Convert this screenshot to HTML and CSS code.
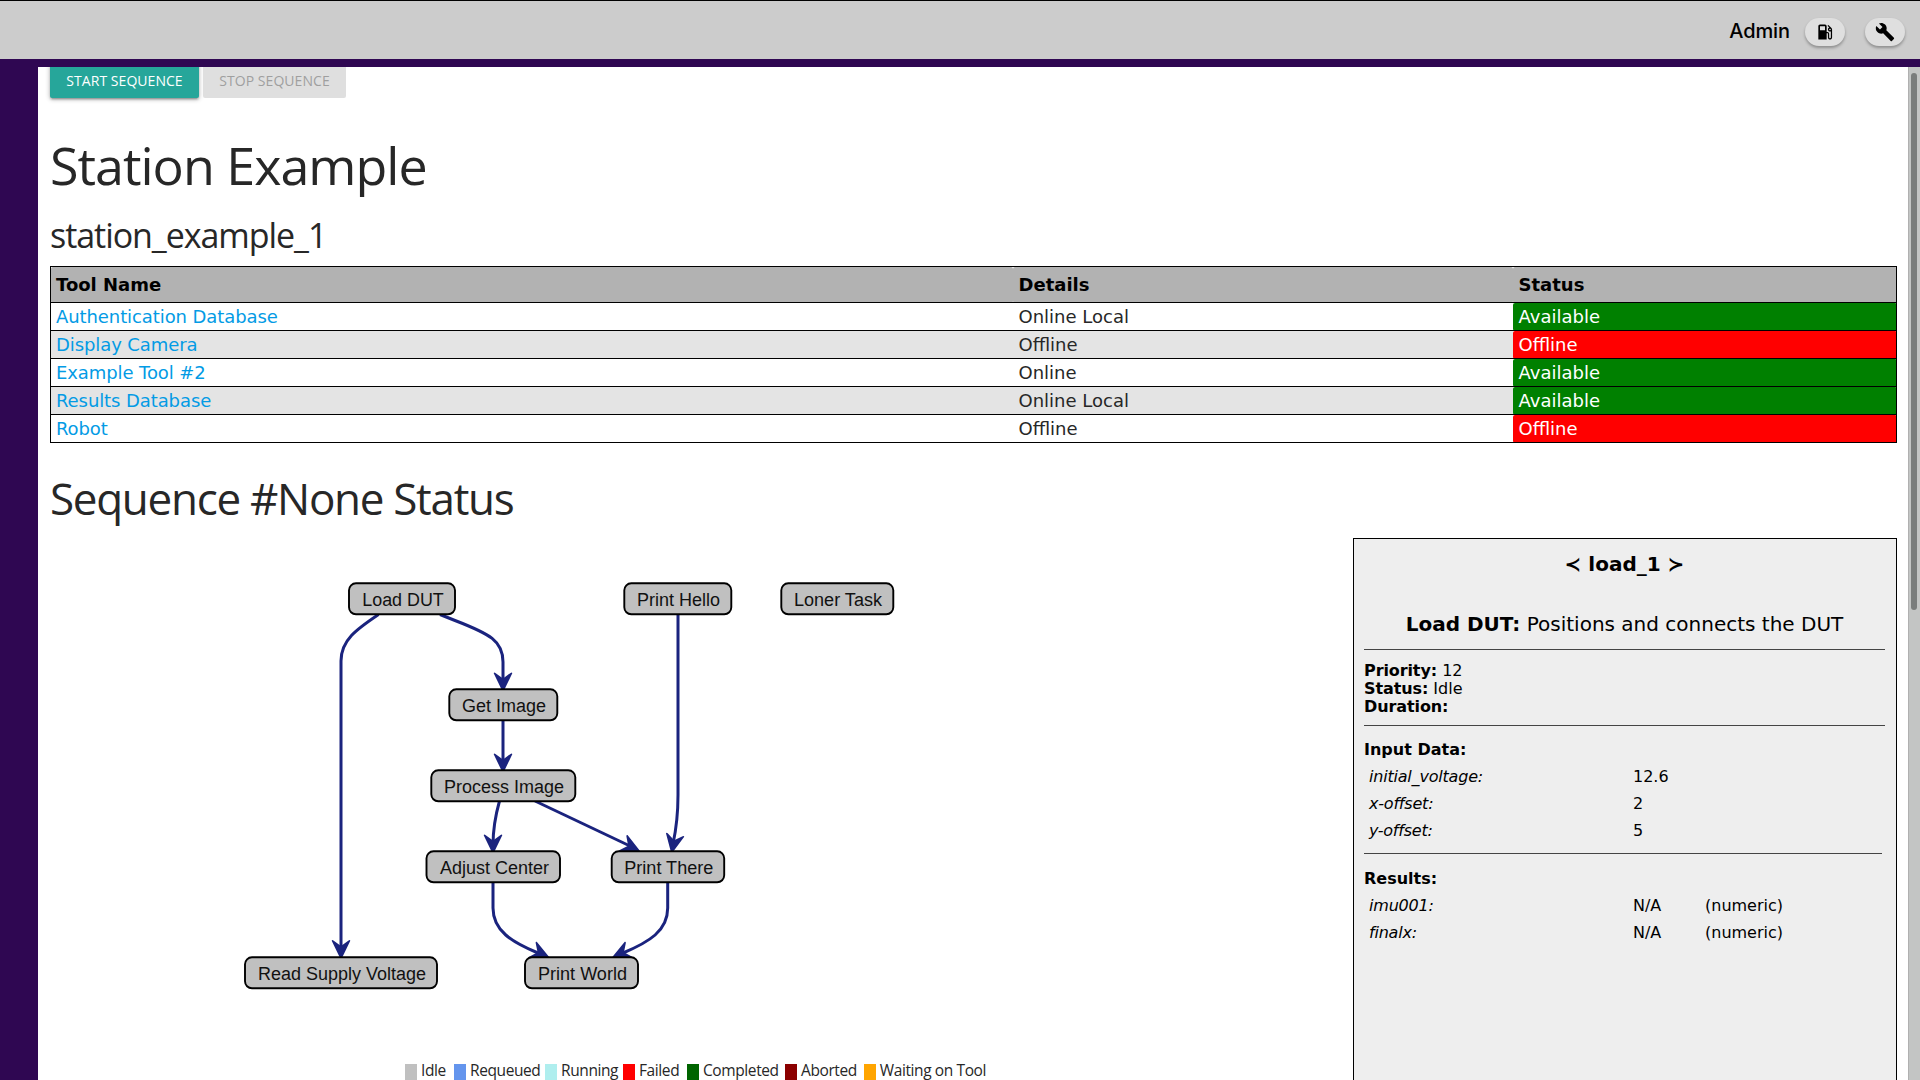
FILE: index.html
```html
<!DOCTYPE html>
<html lang="en">
<head>
<meta charset="utf-8">
<title>Station Example</title>
<link rel="stylesheet" href="styles.css">
</head>
<body>
<header class="topbar">
  <span class="user">Admin</span>
  <button class="pill" aria-label="Fixture"><svg viewBox="0 0 24 24"><path d="M19.77 7.23l.01-.01-3.72-3.72L15 4.56l2.11 2.11c-.94.36-1.61 1.26-1.61 2.33 0 1.38 1.12 2.5 2.5 2.5.36 0 .69-.08 1-.21v7.21c0 .55-.45 1-1 1s-1-.45-1-1V14c0-1.1-.9-2-2-2h-1V5c0-1.1-.9-2-2-2H6c-1.1 0-2 .9-2 2v16h10v-7.5h1.5v5c0 1.38 1.12 2.5 2.5 2.5s2.5-1.12 2.5-2.5V9c0-.69-.28-1.32-.73-1.77zM12 10H6V5h6v5zm6 0c-.55 0-1-.45-1-1s.45-1 1-1 1 .45 1 1-.45 1-1 1z"/></svg></button>
  <button class="pill" aria-label="Tools"><svg viewBox="0 0 24 24"><path d="M22.7 19l-9.1-9.1c.9-2.3.4-5-1.5-6.9-2-2-5-2.4-7.4-1.3L9 6 6 9 1.6 4.7C.4 7.1.9 10.1 2.9 12.1c1.9 1.9 4.6 2.4 6.9 1.5l9.1 9.1c.4.4 1 .4 1.4 0l2.3-2.3c.5-.4.5-1.1.1-1.4z"/></svg></button>
</header>
<div class="shell">
  <main class="content">
    <div class="actions">
      <button class="btn start">START SEQUENCE</button>
      <button class="btn stop" disabled>STOP SEQUENCE</button>
    </div>
    <h1 class="title">Station Example</h1>
    <h2 class="subtitle">station_example_1</h2>
    <table class="tools">
      <colgroup><col class="col-name"><col class="col-details"><col></colgroup>
      <thead><tr><th>Tool Name</th><th>Details</th><th>Status</th></tr></thead>
      <tbody>
        <tr><td><a>Authentication Database</a></td><td>Online Local</td><td class="ok">Available</td></tr>
        <tr><td><a>Display Camera</a></td><td>Offline</td><td class="bad">Offline</td></tr>
        <tr><td><a>Example Tool #2</a></td><td>Online</td><td class="ok">Available</td></tr>
        <tr><td><a>Results Database</a></td><td>Online Local</td><td class="ok">Available</td></tr>
        <tr><td><a>Robot</a></td><td>Offline</td><td class="bad">Offline</td></tr>
      </tbody>
    </table>
    <h2 class="sequence">Sequence #None Status</h2>
    <div class="workspace">
      <section class="graph">
        <svg class="dag" viewBox="50 538 1303 524">
          <defs>
            <path id="head" d="M0 3 L-9.3 -16.2 Q-9 -17.5 -7.6 -16.6 L0 -11 L7.6 -16.6 Q9 -17.5 9.3 -16.2 Z"/>
          </defs>
          <g class="edges">
            <path d="M378.5 614.5C357 629 341 640 341 661V950"/>
            <path d="M440 614.5L455 620.5C490 634 503 641 503 662V682"/>
            <path d="M503 721V763"/>
            <path d="M499.5 801C495 817 493 828 493 845"/>
            <path d="M535 801L630 846"/>
            <path d="M678 614V795C678 817 676 830 673 844"/>
            <path d="M493 882V908C493 931 512 942 538 953"/>
            <path d="M667.7 882V908C667.7 931 649 942 623 953"/>
          </g>
          <g class="heads">
            <use href="#head" transform="translate(341 957)"/>
            <use href="#head" transform="translate(503 689.5)"/>
            <use href="#head" transform="translate(503 770.5)"/>
            <use href="#head" transform="translate(493 851.5)"/>
            <use href="#head" transform="translate(638 850.5) rotate(-64)"/>
            <use href="#head" transform="translate(672 851) rotate(11)"/>
            <use href="#head" transform="translate(547.5 957) rotate(-65)"/>
            <use href="#head" transform="translate(614 957) rotate(65)"/>
          </g>
          <g class="nodes">
            <rect x="349" y="583.3" width="106" height="31" rx="7"/><text x="403" y="606" textLength="81.5" lengthAdjust="spacingAndGlyphs">Load DUT</text>
            <rect x="624.3" y="583.3" width="107" height="31" rx="7"/><text x="678.5" y="606" textLength="83" lengthAdjust="spacingAndGlyphs">Print Hello</text>
            <rect x="781.3" y="583.3" width="112" height="31" rx="7"/><text x="838" y="606" textLength="88" lengthAdjust="spacingAndGlyphs">Loner Task</text>
            <rect x="449.3" y="689.3" width="108" height="31" rx="7"/><text x="504" y="712" textLength="84" lengthAdjust="spacingAndGlyphs">Get Image</text>
            <rect x="431.3" y="770.3" width="144" height="31" rx="7"/><text x="504" y="793" textLength="120" lengthAdjust="spacingAndGlyphs">Process Image</text>
            <rect x="426.5" y="851.3" width="133.5" height="31" rx="7"/><text x="494.5" y="874" textLength="109" lengthAdjust="spacingAndGlyphs">Adjust Center</text>
            <rect x="611.7" y="851.3" width="112.5" height="31" rx="7"/><text x="668.8" y="874" textLength="89" lengthAdjust="spacingAndGlyphs">Print There</text>
            <rect x="245" y="957.3" width="192" height="31" rx="7"/><text x="342" y="980" textLength="168" lengthAdjust="spacingAndGlyphs">Read Supply Voltage</text>
            <rect x="525" y="957.3" width="113" height="31" rx="7"/><text x="582.5" y="980" textLength="89" lengthAdjust="spacingAndGlyphs">Print World</text>
          </g>
        </svg>
        <ul class="legend">
          <li><i class="sw idle"></i>Idle</li>
          <li><i class="sw requeued"></i>Requeued</li>
          <li><i class="sw running"></i>Running</li>
          <li><i class="sw failed"></i>Failed</li>
          <li><i class="sw completed"></i>Completed</li>
          <li><i class="sw aborted"></i>Aborted</li>
          <li><i class="sw waiting"></i>Waiting on Tool</li>
        </ul>
      </section>
      <aside class="panel">
        <div class="task-id">≺ load_1 ≻</div>
        <div class="task-name"><b>Load DUT:</b> Positions and connects the DUT</div>
        <div class="facts">
          <div><b>Priority:</b> 12</div>
          <div><b>Status:</b> Idle</div>
          <div><b>Duration:</b></div>
        </div>
        <div class="block">
          <b class="block-title">Input Data:</b>
          <div class="field"><em>initial_voltage:</em><span>12.6</span></div>
          <div class="field"><em>x-offset:</em><span>2</span></div>
          <div class="field"><em>y-offset:</em><span>5</span></div>
        </div>
        <div class="block results">
          <b class="block-title">Results:</b>
          <div class="field"><em>imu001:</em><span>N/A</span><span>(numeric)</span></div>
          <div class="field"><em>finalx:</em><span>N/A</span><span>(numeric)</span></div>
        </div>
      </aside>
    </div>
  </main>
  <div class="scrollbar"><div class="thumb"></div></div>
</div>
</body>
</html>
```
FILE: styles.css
```css
* { box-sizing: border-box; }
body {
  margin: 0;
  height: 1080px;
  overflow: hidden;
  display: flex;
  flex-direction: column;
  background: #2f0752;
  color: #272727;
  font-family: "DejaVu Sans", sans-serif;
}
.topbar {
  flex: none;
  height: 59px;
  border-top: 1px solid #000;
  background: #ccc;
  display: flex;
  align-items: center;
  justify-content: flex-end;
  gap: 20px;
  padding: 4px 15px 0 0;
}
.user {
  font: 500 20px/24px Inter, sans-serif;
  letter-spacing: -.1px;
  color: #000;
  margin: 0 -5px 2px 0;
}
.pill {
  width: 40px;
  height: 28px;
  padding: 0;
  border: 0;
  border-radius: 14px;
  background: #dfdfdf;
  box-shadow: 0 2px 3px rgba(0, 0, 0, .3);
  display: flex;
  align-items: center;
  justify-content: center;
}
.pill svg { width: 20px; height: 20px; fill: #000; }
.shell {
  flex: 1;
  min-height: 0;
  margin-top: 8px;
  padding-left: 38px;
  display: flex;
}
.content {
  flex: 1;
  background: #fff;
  overflow: hidden;
  padding: 0 11px 0 12px;
}
.scrollbar {
  width: 12px;
  background: #c3c5c4;
  border-left: 1px solid #b0b0b0;
  padding: 6px 3px 0 2px;
}
.thumb { height: 537px; border-radius: 3px; background: #7a7d7c; }

.actions { display: flex; gap: 4px; margin-top: -5px; }
.btn {
  height: 36px;
  padding: 2px 0 0;
  border: 0;
  border-radius: 2px;
  font: 14px/34px "Open Sans", sans-serif;
  letter-spacing: .05px;
}
.start {
  width: 149px;
  background: #26a69a;
  color: #fff;
  box-shadow: 0 2px 2px rgba(0, 0, 0, .14), 0 3px 1px -2px rgba(0, 0, 0, .12), 0 1px 5px rgba(0, 0, 0, .3);
}
.stop { width: 143px; background: #dfdfdf; color: #9f9f9f; }

.title, .subtitle, .sequence { font-family: "Open Sans", sans-serif; font-weight: 400; }
.title { margin: 37px 0 0; font-size: 52px; line-height: 60px; letter-spacing: -1px; }
.subtitle { margin: 20px 0 0; font-size: 34px; line-height: 40px; letter-spacing: -1.05px; }
.sequence { margin: 30px 0 0; font-size: 44px; line-height: 50px; letter-spacing: -1.3px; }

.tools {
  width: 1847px;
  margin-top: 11px;
  table-layout: fixed;
  border-collapse: collapse;
  border: 1px solid #000;
  font-size: 18px;
  line-height: 22px;
}
.col-name { width: 962px; }
.col-details { width: 500px; }
.tools tr { border-bottom: 1px solid #000; }
.tools th { height: 36px; padding: 0 5px; background: #b2b2b2; color: #000; text-align: left; border-radius: 2px; }
.tools td { height: 28px; padding: 0 5px; }
.tools th + th, .tools td + td { padding-left: 6px; }
.tools tbody tr:nth-child(even) { background: #e4e4e4; }
.tools a { color: #039be5; letter-spacing: -.09px; }
.tools .ok { background: #008000; color: #fff; border-radius: 2px; }
.tools .bad { background: #f00; color: #fff; border-radius: 2px; }

.workspace { display: flex; margin-top: 15px; }
.graph { flex: 1; }
.dag { display: block; width: 1303px; height: 524px; }
.edges path { fill: none; stroke: #1a237e; stroke-width: 3; }
.heads { fill: #1a237e; }
.nodes rect { fill: #c0c0c0; stroke: #000; stroke-width: 1.9; }
.nodes text { font: 18px "Liberation Sans", sans-serif; text-anchor: middle; fill: #111; }

.legend {
  list-style: none;
  margin: 0;
  padding: 0 0 0 355px;
  display: grid;
  grid-template-columns: 49px 91px 78px 64px 98px 79px 122px;
  font: 15.5px/17px "Open Sans", sans-serif;
  letter-spacing: -.4px;
  white-space: nowrap;
}
.legend li { display: flex; gap: 4px; }
.sw { width: 12px; height: 20px; margin-top: 2px; }
.idle { background: #c0c0c0; }
.requeued { background: #6495ed; }
.running { background: #afeeee; }
.failed { background: #f00; }
.completed { background: #006400; }
.aborted { background: #8b0000; }
.waiting { background: #ffa500; }

.panel {
  width: 544px;
  height: 700px;
  border: 1px solid #000;
  background: #eee;
  color: #000;
  padding: 13px 11px 0 10px;
  font-size: 16px;
  line-height: 18px;
}
.task-id, .task-name { font-size: 20px; line-height: 24px; text-align: center; }
.task-id { font-weight: 700; }
.task-name { margin-top: 36px; padding-bottom: 13px; border-bottom: 1px solid #444; }
.facts { padding: 12px 0 9px; border-bottom: 1px solid #444; }
.facts b { letter-spacing: -.1px; }
.block { padding: 15px 0 9px; }
.block-title { display: block; margin-bottom: 4px; }
.field { display: grid; grid-template-columns: 264px 72px 1fr; line-height: 27px; padding-left: 5px; }
.field em { letter-spacing: -.2px; }
.results { border-top: 1px solid #444; margin-right: 3px; padding-top: 16px; }
```
